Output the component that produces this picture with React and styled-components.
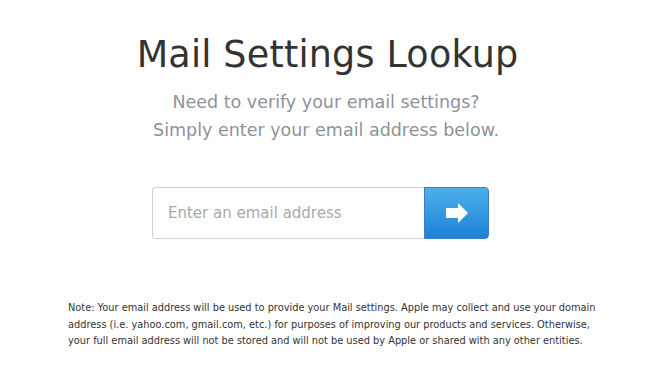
import React, { useState } from "react";
import styled, { createGlobalStyle } from "styled-components";

const GlobalStyle = createGlobalStyle`
  body {
    margin: 0;
    background: #ffffff;
    font-family: "DejaVu Sans", "Lucida Grande", sans-serif;
  }
`

const Page = styled.div`
  width: 648px;
  height: 374px;
  display: flex;
  flex-direction: column;
  align-items: center;
  padding-top: 32px;
  box-sizing: border-box;
`
const Title = styled.h1`
  margin: 0 0 0 7px;
  font-size: 36.5px;
  font-weight: normal;
  color: #333333;
  letter-spacing: 0.2px;
  line-height: 46px;
`
const Subtitle = styled.p`
  margin: 10px 0 0 4px;
  font-size: 17.5px;
  line-height: 28px;
  color: #8e939b;
  text-align: center;
`
const Form = styled.form`
  display: flex;
  margin-top: 43px;
  margin-right: 7px;
`
const EmailInput = styled.input`
  width: 272px;
  height: 52px;
  box-sizing: border-box;
  border: 1px solid #cfcfcf;
  border-right: none;
  border-radius: 4px 0 0 4px;
  padding: 0 15px;
  font-family: "DejaVu Sans", sans-serif;
  font-size: 15px;
  color: #333;
  outline: none;
  &::placeholder {
    color: #a9a9a9;
  }
`
const GoButton = styled.button`
  width: 65px;
  height: 52px;
  box-sizing: border-box;
  border: 1px solid #3b7fbf;
  border-radius: 0 4px 4px 0;
  background: linear-gradient(#4cb0ec, #1d82d7);
  display: flex;
  align-items: center;
  justify-content: center;
  padding: 0;
  cursor: pointer;
`
const Note = styled.p`
  margin: 61px 0 0 16px;
  width: 528px;
  font-size: 9.8px;
  line-height: 16.5px;
  color: #333333;
  white-space: nowrap;
`

const App = () => {
  const [email, setEmail] = useState("")

  const handleSubmit = event => {
    event.preventDefault();
  }

  return (
    <Page>
      <GlobalStyle />
      <Title>Mail Settings Lookup</Title>
      <Subtitle>
        Need to verify your email settings?<br />
        Simply enter your email address below.
      </Subtitle>
      <Form onSubmit={handleSubmit}>
        <EmailInput
          type="email"
          placeholder="Enter an email address"
          value={email}
          onChange={e => setEmail(e.target.value)}
        />
        <GoButton type="submit">
          <svg width="22" height="20" viewBox="0 0 22 20">
            <path d="M0 5 H12 V0 L22 10 L12 20 V15 H0 Z" fill="#ffffff" />
          </svg>
        </GoButton>
      </Form>
      <Note>
        Note: Your email address will be used to provide your Mail settings. Apple may collect and use your domain<br />
        address (i.e. yahoo.com, gmail.com, etc.) for purposes of improving our products and services. Otherwise,<br />
        your full email address will not be stored and will not be used by Apple or shared with any other entities.
      </Note>
    </Page>
  );
};

export default App;
